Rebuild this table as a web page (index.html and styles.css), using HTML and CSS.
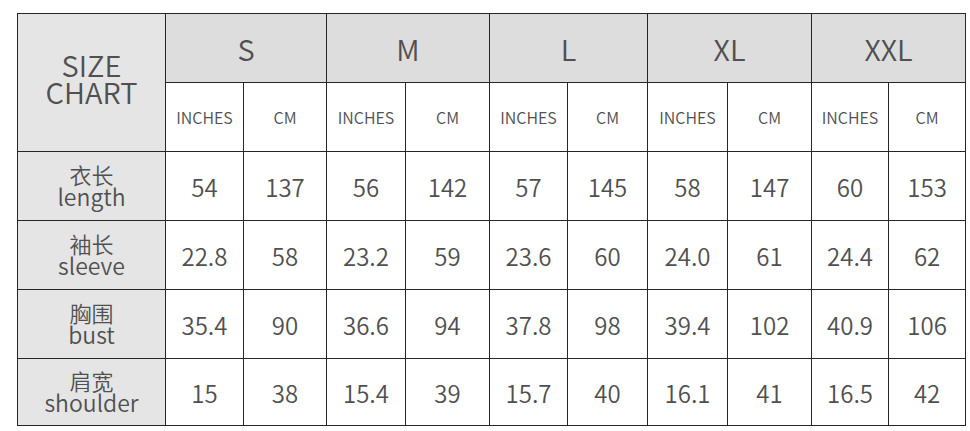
FILE: index.html
```html
<!DOCTYPE html>
<html lang="zh">
<head>
<meta charset="utf-8">
<title>Size Chart</title>
<link rel="stylesheet" href="styles.css">
</head>
<body>
<div class="wrap">
<table class="chart">
  <colgroup>
    <col class="c-label">
    <col class="c-s1"><col class="c-s2">
    <col class="c-m1"><col class="c-m2">
    <col class="c-l1"><col class="c-l2">
    <col class="c-xl1"><col class="c-xl2">
    <col class="c-xxl1"><col class="c-xxl2">
  </colgroup>
  <thead>
    <tr class="r-size">
      <th class="title" rowspan="2"><span class="title-in"><span class="ln">SIZE</span><span class="ln">CHART</span></span></th>
      <th class="size" colspan="2">S</th>
      <th class="size" colspan="2">M</th>
      <th class="size" colspan="2">L</th>
      <th class="size" colspan="2">XL</th>
      <th class="size" colspan="2">XXL</th>
    </tr>
    <tr class="r-unit">
      <th class="unit">INCHES</th><th class="unit">CM</th>
      <th class="unit">INCHES</th><th class="unit">CM</th>
      <th class="unit">INCHES</th><th class="unit">CM</th>
      <th class="unit">INCHES</th><th class="unit">CM</th>
      <th class="unit">INCHES</th><th class="unit">CM</th>
    </tr>
  </thead>
  <tbody>
    <tr class="r-data">
      <th class="label"><span class="ln zh">衣长</span><span class="ln en">length</span></th>
      <td>54</td><td>137</td><td>56</td><td>142</td><td>57</td><td>145</td><td>58</td><td>147</td><td>60</td><td>153</td>
    </tr>
    <tr class="r-data">
      <th class="label"><span class="ln zh">袖长</span><span class="ln en">sleeve</span></th>
      <td>22.8</td><td>58</td><td>23.2</td><td>59</td><td>23.6</td><td>60</td><td>24.0</td><td>61</td><td>24.4</td><td>62</td>
    </tr>
    <tr class="r-data">
      <th class="label"><span class="ln zh">胸围</span><span class="ln en">bust</span></th>
      <td>35.4</td><td>90</td><td>36.6</td><td>94</td><td>37.8</td><td>98</td><td>39.4</td><td>102</td><td>40.9</td><td>106</td>
    </tr>
    <tr class="r-data r-last">
      <th class="label"><span class="ln zh">肩宽</span><span class="ln en">shoulder</span></th>
      <td>15</td><td>38</td><td>15.4</td><td>39</td><td>15.7</td><td>40</td><td>16.1</td><td>41</td><td>16.5</td><td>42</td>
    </tr>
  </tbody>
</table>
</div>
</body>
</html>
```
FILE: styles.css
```css
html, body {
  margin: 0;
  padding: 0;
  background: #ffffff;
}

.wrap {
  padding: 13px 0 0 17px;
}

.chart {
  border-collapse: collapse;
  table-layout: fixed;
  width: 949px;
  font-family: "Noto Sans CJK SC", "Noto Sans", sans-serif;
  color: #505050;
}

.c-label { width: 148px; }
.c-s1 { width: 78px; }
.c-s2 { width: 83px; }
.c-m1 { width: 79px; }
.c-m2 { width: 84px; }
.c-l1 { width: 78px; }
.c-l2 { width: 80px; }
.c-xl1 { width: 80px; }
.c-xl2 { width: 84px; }
.c-xxl1 { width: 77px; }
.c-xxl2 { width: 77px; }

.chart th,
.chart td {
  border: 1px solid #262626;
  padding: 0;
  text-align: center;
  vertical-align: middle;
  font-weight: 350;
}

.r-size th,
.r-unit th,
.r-data th,
.r-data td {
  height: 68px;
}

.r-last th,
.r-last td {
  height: 66px;
}

.ln {
  display: block;
}

.title {
  background: #e5e5e5;
  font-size: 29px;
}

.title-in {
  display: flex;
  flex-direction: column;
  align-items: center;
  margin-top: -10px;
}

.title .ln {
  line-height: 27px;
  height: 27px;
}

.size {
  background: #dddddd;
  font-size: 29px;
}

.unit {
  background: #ffffff;
  font-size: 16px;
  padding-top: 3px;
}

.label {
  background: #e5e5e5;
}

.label .zh {
  font-size: 22px;
  line-height: 21px;
  height: 21px;
}

.label .en {
  font-size: 23px;
  line-height: 23px;
  height: 23px;
}

.r-data td {
  font-size: 24px;
  background: #ffffff;
}
```
